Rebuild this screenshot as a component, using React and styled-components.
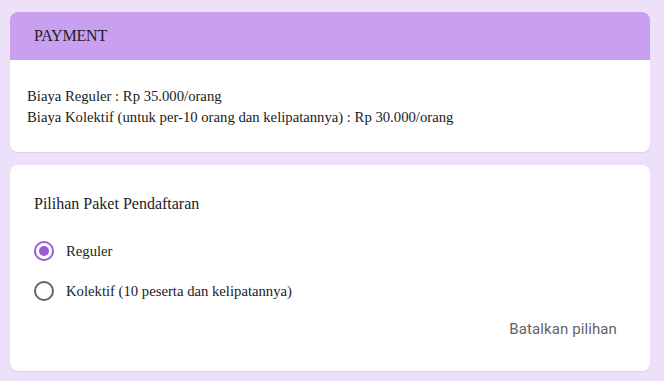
import React,{useState} from "react";
import styled,{createGlobalStyle} from "styled-components";

const GlobalStyle = createGlobalStyle`
    html,body{margin:0;padding:0;background:#ede0f9;}
    body{font-family:"Liberation Serif","Times New Roman",serif;color:#202124;}
`;
const Page = styled.div`
    width:664px;height:381px;box-sizing:border-box;padding:12px 14px 0 10px;display:flex;flex-direction:column;gap:13px;
`;
const Card = styled.section`
    background:#fff;border-radius:8px;overflow:hidden;box-shadow:0 1px 1px rgba(120,80,160,.12);
`;
const CardHead = styled.div`
    height:48px;background:#c9a0ef;display:flex;align-items:center;padding:0 24px;font-size:16px;color:#202124;letter-spacing:-.2px;
`;
const CardBody = styled.div`
    padding:${p => p.$pad || "26px 17px 24px"};font-size:14.7px;line-height:21px;
`;
const Title = styled.div`
    font-size:16px;line-height:21px;margin-bottom:27px;
`;
const Options = styled.div`
    display:flex;flex-direction:column;gap:20px;
`;
const Option = styled.label`
    display:flex;align-items:center;gap:12px;height:20px;cursor:pointer;font-size:14.7px;
`;
const Radio = styled.span`
    width:20px;height:20px;box-sizing:border-box;border-radius:50%;border:2px solid ${p => p.$on ? "#9c5bd6" : "#5f6368"};display:flex;align-items:center;justify-content:center;flex:none;
    &::after{content:"";width:10px;height:10px;border-radius:50%;background:#9c5bd6;display:${p => p.$on ? "block" : "none"};}
`;
const Footer = styled.div`
    display:flex;justify-content:flex-end;margin-top:18px;padding-right:9px;
`;
const Clear = styled.button`
    border:none;background:none;padding:0;font-family:Roboto,"Noto Sans",sans-serif;font-size:15px;color:#5f6368;cursor:pointer;line-height:20px;letter-spacing:.1px;
`;
const options = ["Reguler","Kolektif (10 peserta dan kelipatannya)"];
const App = () => {
    const [picked,setPicked] = useState(0);
    return (
        <React.Fragment>
            <GlobalStyle/>
            <Page>
                <Card>
                    <CardHead>PAYMENT</CardHead>
                    <CardBody>
                        <div>Biaya Reguler : Rp 35.000/orang</div>
                        <div>Biaya Kolektif (untuk per-10 orang dan kelipatannya) : Rp 30.000/orang</div>
                    </CardBody>
                </Card>
                <Card>
                    <CardBody $pad="28px 24px 32px">
                        <Title>Pilihan Paket Pendaftaran</Title>
                        <Options>
                            {options.map((o,i) => (
                                <Option key={o} onClick={() => setPicked(i)}>
                                    <Radio $on={picked === i}/>
                                    {o}
                                </Option>
                            ))}
                        </Options>
                        <Footer>
                            <Clear type="button" onClick={() => setPicked(-1)}>Batalkan pilihan</Clear>
                        </Footer>
                    </CardBody>
                </Card>
            </Page>
        </React.Fragment>
    );
}
export default App;
